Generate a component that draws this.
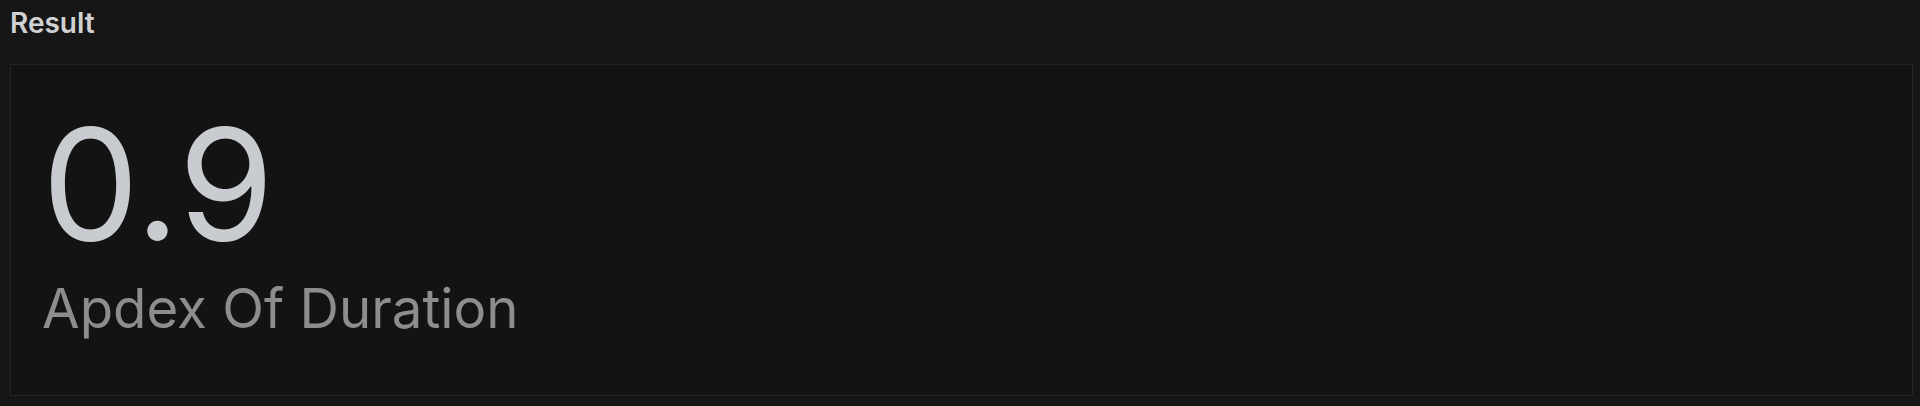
export default function App() {
  return (
    <div className="w-[1920px] h-[406px] bg-[#161616] overflow-hidden" style={{ fontFamily: "Inter, 'Noto Sans', sans-serif" }}>
      <div className="h-[64px] pl-[10px] pt-[9px]">
        <div className="text-[28px] font-semibold leading-none text-[#d0d1d3]">Result</div>
      </div>
      <div className="ml-[10px] w-[1903px] h-[332px] border border-[#242424] bg-[#131313] pl-[31px] pt-[42px]">
        <div className="text-[154px] font-normal leading-none text-[#c8ccd0]">0.9</div>
        <div className="text-[54.6px] font-normal leading-none text-[#8b8d8f] mt-[20px]">Apdex Of Duration</div>
      </div>
    </div>
  );
}
